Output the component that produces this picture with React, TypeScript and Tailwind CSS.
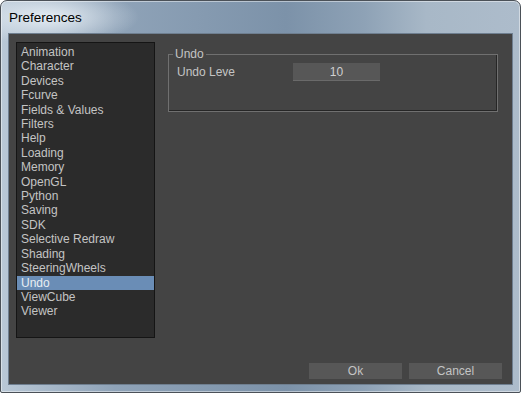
import React from "react"

const items = [
  "Animation",
  "Character",
  "Devices",
  "Fcurve",
  "Fields & Values",
  "Filters",
  "Help",
  "Loading",
  "Memory",
  "OpenGL",
  "Python",
  "Saving",
  "SDK",
  "Selective Redraw",
  "Shading",
  "SteeringWheels",
  "Undo",
  "ViewCube",
  "Viewer",
]

export default function App() {
  return (
    <div className="w-[521px] h-[393px] overflow-hidden bg-white font-['Liberation_Sans',Arial,sans-serif]">
      <div className="flex h-full w-full flex-col rounded-t-[7px] rounded-b-[2px] border border-[#4b5158] bg-[radial-gradient(ellipse_90px_28px_at_48px_16px,rgba(235,242,248,0.9),rgba(235,242,248,0)),linear-gradient(to_right,#b9c8d6_0%,#8fa3b8_22%,#7c92a9_55%,#8ea2b6_70%,#a8b8c7_82%,#adbccb_100%)] shadow-[inset_0_0_0_1px_rgba(255,255,255,0.45)]">
        {/* title bar */}
        <div className="flex h-[32px] items-center pl-[8px] pt-[2px] text-[13.5px] text-black">
          Preferences
        </div>

        {/* client area */}
        <div className="mx-[7px] mb-[7px] flex flex-1 flex-col border border-[#6f7f90] bg-[#444444] text-[12px] leading-[14.4px]">
          <div className="flex pt-[8px] pl-[7px] pr-[14px]">
            {/* category list */}
            <div className="h-[296px] w-[139px] shrink-0 border border-[#151515] bg-[#2b2b2b] pt-[2px]">
              {items.map((item) => (
                <div
                  key={item}
                  className={
                    item === "Undo"
                      ? "bg-[#6a8db6] pl-[4px] text-[#e8edf3]"
                      : "pl-[4px] text-[#c4c4c4]"
                  }
                >
                  {item}
                </div>
              ))}
            </div>

            {/* settings pane */}
            <div className="ml-[13px] flex-1 pt-[5px]">
              <fieldset className="h-[65px] border border-[#707070] shadow-[inset_-1px_-1px_0_#262626]">
                <legend className="ml-[4px] px-[2px] text-[#c4c4c4]">Undo</legend>
                <div className="flex items-center pl-[8px] pt-[2px]">
                  <span className="w-[116px] text-[#c4c4c4]">Undo Leve</span>
                  <div className="flex h-[18px] w-[87px] items-center justify-center bg-[#575757] text-[#d0d0d0] shadow-[inset_0_-1px_0_#6a6a6a]">
                    10
                  </div>
                </div>
              </fieldset>
            </div>
          </div>

          {/* buttons */}
          <div className="mt-auto flex justify-end gap-[7px] pr-[10px] pb-[5px]">
            <button className="h-[16px] w-[93px] bg-[#575757] text-[12px] leading-[16px] text-[#c4c4c4]">
              Ok
            </button>
            <button className="h-[16px] w-[93px] bg-[#575757] text-[12px] leading-[16px] text-[#c4c4c4]">
              Cancel
            </button>
          </div>
        </div>
      </div>
    </div>
  )
}
